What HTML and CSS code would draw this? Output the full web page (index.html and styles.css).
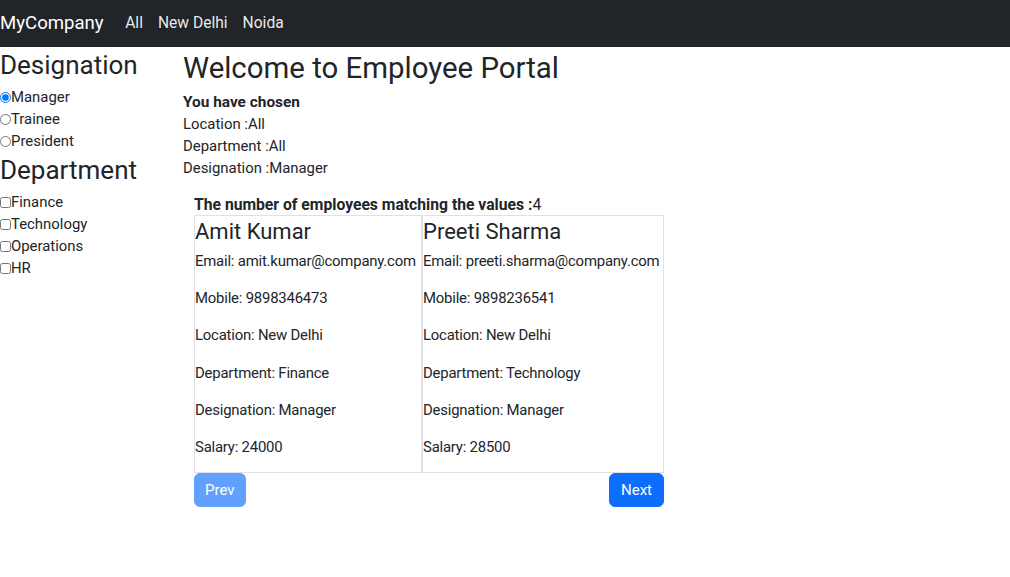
FILE: index.html
```html
<!DOCTYPE html>
<html lang="en">
<head>
<meta charset="utf-8">
<title>Employee Portal</title>
<link rel="stylesheet" href="styles.css">
</head>
<body>
<nav class="navbar">
  <a class="brand" href="#">MyCompany</a>
  <ul class="nav-links">
    <li><a href="#">All</a></li>
    <li><a href="#">New Delhi</a></li>
    <li><a href="#">Noida</a></li>
  </ul>
</nav>
<div class="page">
  <aside class="sidebar">
    <h3 class="side-title">Designation</h3>
    <label class="opt"><input type="radio" name="des" checked>Manager</label>
    <label class="opt"><input type="radio" name="des">Trainee</label>
    <label class="opt"><input type="radio" name="des">President</label>
    <h3 class="side-title">Department</h3>
    <label class="opt"><input type="checkbox">Finance</label>
    <label class="opt"><input type="checkbox">Technology</label>
    <label class="opt"><input type="checkbox">Operations</label>
    <label class="opt"><input type="checkbox">HR</label>
  </aside>
  <main class="main">
    <h2 class="title">Welcome to Employee Portal</h2>
    <div class="chosen">
      <div class="bold">You have chosen</div>
      <div>Location :All</div>
      <div>Department :All</div>
      <div>Designation :Manager</div>
    </div>
    <div class="results">
      <div class="count"><b>The number of employees matching the values :</b>4</div>
      <table class="cards">
        <tr>
          <td class="cell cell-a">
            <h4 class="name">Amit Kumar</h4>
            <p>Email: amit.kumar@company.com</p>
            <p>Mobile: 9898346473</p>
            <p>Location: New Delhi</p>
            <p>Department: Finance</p>
            <p>Designation: Manager</p>
            <p>Salary: 24000</p>
          </td>
          <td class="cell cell-b">
            <h4 class="name">Preeti Sharma</h4>
            <p>Email: preeti.sharma@company.com</p>
            <p>Mobile: 9898236541</p>
            <p>Location: New Delhi</p>
            <p>Department: Technology</p>
            <p>Designation: Manager</p>
            <p>Salary: 28500</p>
          </td>
        </tr>
      </table>
      <div class="pager">
        <button class="btn btn-prev" disabled>Prev</button>
        <button class="btn">Next</button>
      </div>
    </div>
  </main>
</div>
</body>
</html>
```
FILE: styles.css
```css
* { box-sizing: border-box; }
html, body {
  margin: 0;
  padding: 0;
}
body {
  font-family: Roboto, "Noto Sans", sans-serif;
  font-size: 15px;
  color: #212529;
  background: #fff;
}
.navbar {
  height: 47px;
  background: #212529;
  display: flex;
  align-items: center;
}
.brand {
  color: #fff;
  font-size: 18.6px;
  text-decoration: none;
  margin-right: 14px;
  padding-bottom: 2px;
}
.nav-links {
  display: flex;
  list-style: none;
  margin: 0;
  padding: 0;
}
.nav-links a {
  display: block;
  color: rgba(255, 255, 255, 0.92);
  text-decoration: none;
  padding: 0 7.5px;
  font-size: 15.6px;
  padding-bottom: 2px;
}
.page {
  display: flex;
}
.sidebar {
  width: 183px;
  flex-shrink: 0;
  display: flex;
  flex-direction: column;
  align-items: flex-start;
}
.side-title {
  font-size: 26px;
  font-weight: 400;
  line-height: 32px;
  margin: 2px 0 5px;
}
.opt {
  display: flex;
  align-items: center;
  line-height: 22px;
  height: 22px;
  font-size: 14.9px;
}
.opt input {
  margin: 0;
  width: 11px;
  height: 11px;
}
.main {
  flex: 1;
}
.title {
  font-size: 29.4px;
  font-weight: 400;
  line-height: 36px;
  margin: 3px 0 5px;
}
.chosen {
  line-height: 22px;
  font-size: 14.9px;
}
.bold { font-weight: 700; font-size: 15.4px; }
.results {
  margin: 16px 0 0 11px;
  width: 470px;
}
.count {
  line-height: 20px;
  font-size: 15.7px;
}
.count b { font-weight: 700; }
.cards {
  border-collapse: separate;
  border-spacing: 0;
  border: 1px solid #dee2e6;
  width: 470px;
  table-layout: fixed;
}
.cell {
  vertical-align: top;
  padding: 0;
  white-space: nowrap;
}
.cell-a {
  width: 227px;
  border-right: 1px solid #dee2e6;
}
.cell-b {
  border-left: 1px solid #dee2e6;
}
.name {
  font-size: 22px;
  font-weight: 400;
  line-height: 28px;
  margin: 2px 0 5px;
}
.cell p {
  margin: 0 0 16px;
  line-height: 21.2px;
  font-size: 14.9px;
  letter-spacing: -0.2px;
}
.cell p:last-child {
  margin-bottom: 14px;
}
.pager {
  display: flex;
  justify-content: space-between;
}
.btn {
  font-family: inherit;
  font-size: 15px;
  line-height: 20px;
  height: 34px;
  padding: 6px 11px;
  border: 1px solid #0d6efd;
  background: #0d6efd;
  color: #fff;
  border-radius: 6px;
  cursor: pointer;
}
.btn-prev {
  padding: 6px 10px;
  opacity: 0.65;
  cursor: default;
}
```
